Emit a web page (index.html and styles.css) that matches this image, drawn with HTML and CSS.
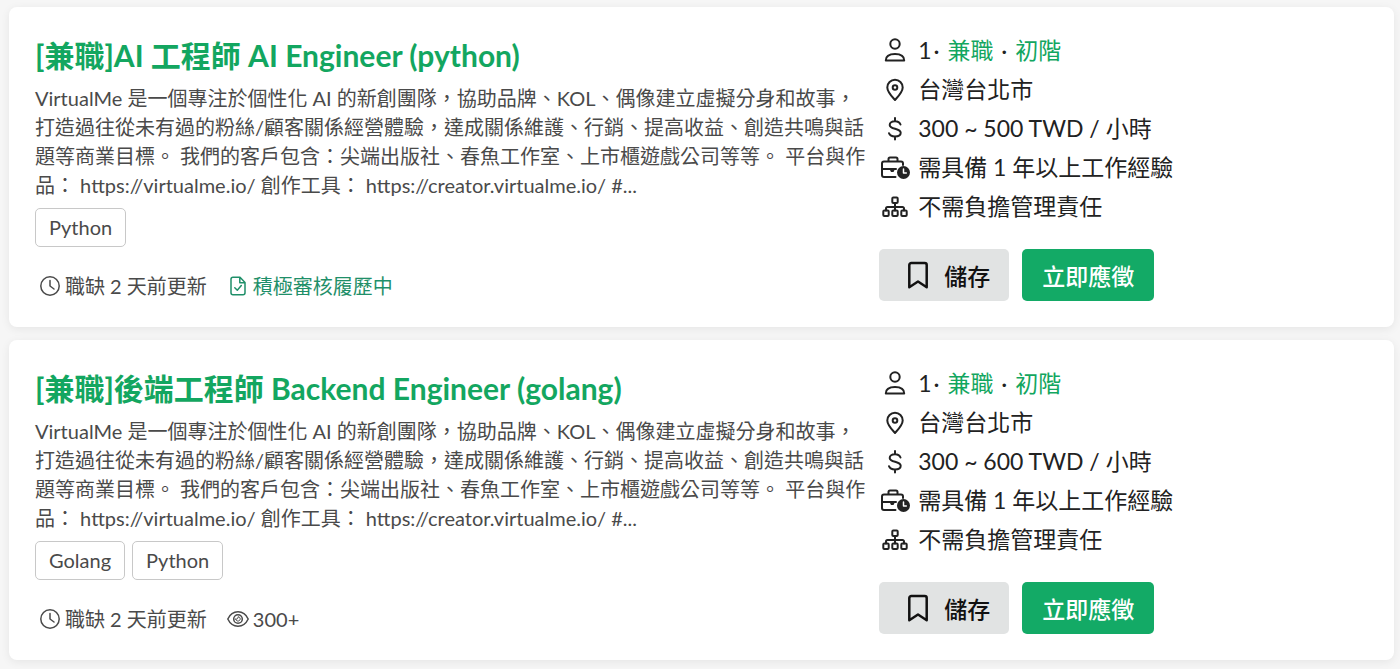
FILE: index.html
```html
<!DOCTYPE html>
<html lang="zh-Hant">
<head>
  <meta charset="UTF-8">
  <meta name="viewport" content="width=device-width, initial-scale=1.0">
  <title>職缺列表</title>
  <link rel="stylesheet" href="styles.css">
</head>
<body>
  <!-- 共用圖示 -->
  <svg class="sprite" aria-hidden="true">
    <symbol id="icon-user" viewBox="0 0 32 32">
      <circle cx="16" cy="9" r="4.700"/>
      <path d="M6.800 25.500c0-4.200 3.200-6.500 9.200-6.500s9.200 2.300 9.200 6.500z"/>
    </symbol>
    <symbol id="icon-pin" viewBox="0 0 32 32">
      <path d="M16 26c-4-4.500-7.700-8.300-7.700-12.600a7.700 7.700 0 0 1 15.400 0c0 4.300-3.700 8.100-7.700 12.600z"/>
      <circle cx="16" cy="13.500" r="2.300"/>
    </symbol>
    <symbol id="icon-dollar" viewBox="0 0 32 32">
      <path d="M16 5v3M16 23.500v3M21.500 11.500c-.8-2.200-2.600-3.200-5.500-3.200-3.300 0-5.300 1.300-5.300 3.600 0 5 11 2.600 11 7.900 0 2.400-2.300 3.700-5.700 3.700-3.100 0-5.200-1.200-6-3.300"/>
    </symbol>
    <symbol id="icon-work" viewBox="0 0 32 32">
      <path d="M9.500 9.500V7A1.500 1.500 0 0 1 11 5.500h6A1.500 1.500 0 0 1 18.500 7v2.500M24 13v-1.500a2 2 0 0 0-2-2H5a2 2 0 0 0-2 2V23a2 2 0 0 0 2 2h11.500M3 17h14"/>
      <path class="solid" d="M10.500 17h5.500l-1.500 3H12z"/>
      <circle class="solid" cx="24.500" cy="20.500" r="6.500"/>
      <path class="hand" d="M24.500 17v4h2.800"/>
    </symbol>
    <symbol id="icon-org" viewBox="0 0 32 32">
      <rect x="13.300" y="6.500" width="5.400" height="5.400" rx="1"/>
      <rect x="4.300" y="19.500" width="5.400" height="5.400" rx="1"/>
      <rect x="13.300" y="19.500" width="5.400" height="5.400" rx="1"/>
      <rect x="22.300" y="19.500" width="5.400" height="5.400" rx="1"/>
      <path d="M16 12v7.500M7 19.500v-2A1.500 1.500 0 0 1 8.500 16h15a1.500 1.500 0 0 1 1.500 1.500v2"/>
    </symbol>
    <symbol id="icon-clock" viewBox="0 0 22 22">
      <circle cx="11" cy="11" r="9.200"/>
      <path d="M11 5.500V11l4 3"/>
    </symbol>
    <symbol id="icon-doc" viewBox="0 0 22 22">
      <path d="M13 2.300H6a2 2 0 0 0-2 2v13.500a2 2 0 0 0 2 2h10a2 2 0 0 0 2-2V7.500zM12.800 2.500v5.200h5M7.800 12.800l2.500 2.400 4-4.600"/>
    </symbol>
    <symbol id="icon-eye" viewBox="0 0 22 22">
      <path d="M.8 11C3 6.300 6.800 3.800 11 3.800s8 2.500 10.200 7.200c-2.200 4.700-6 7.200-10.200 7.200S3 15.700.8 11z"/>
      <circle cx="11" cy="11" r="4.300"/>
      <path class="pupil" d="M8.700 11.200c1.500.2 2.500-.8 2.300-2.400 1.500 0 2.300 1 2.200 2.300-.3 2.600-4.200 2.700-4.500.1z"/>
    </symbol>
    <symbol id="icon-bookmark" viewBox="0 0 20 28">
      <path d="M1.300 26.200V4a2 2 0 0 1 2-2h13.400a2 2 0 0 1 2 2v22.200L10 20.500z"/>
    </symbol>
  </svg>

  <main class="job-list">
    <article class="job-card">
      <div class="job-main">
        <h2 class="job-title"><a href="#">[兼職]AI 工程師 AI Engineer (python)</a></h2>
        <p class="job-desc">VirtualMe 是一個專注於個性化 AI 的新創團隊，協助品牌、KOL、偶像建立虛擬分身和故事，打造過往從未有過的粉絲/顧客關係經營體驗，達成關係維護、行銷、提高收益、創造共鳴與話題等商業目標。 我們的客戶包含：尖端出版社、春魚工作室、上市櫃遊戲公司等等。 平台與作品： https://virtualme.io/ 創作工具： https://creator.virtualme.io/ #...</p>
        <div class="tags">
          <a class="tag" href="#">Python</a>
        </div>
        <div class="meta">
          <span class="meta-item"><svg class="icon-sm"><use href="#icon-clock"/></svg>職缺 2 天前更新</span>
          <span class="meta-item active"><svg class="icon-sm"><use href="#icon-doc"/></svg>積極審核履歷中</span>
        </div>
      </div>
      <div class="job-side">
        <ul class="info">
          <li><svg class="icon"><use href="#icon-user"/></svg><span>1<span class="dot">·</span> <a href="#">兼職</a> <span class="dot">·</span> <a href="#">初階</a></span></li>
          <li><svg class="icon"><use href="#icon-pin"/></svg><span>台灣台北市</span></li>
          <li><svg class="icon"><use href="#icon-dollar"/></svg><span>300 ~ 500 TWD / 小時</span></li>
          <li><svg class="icon"><use href="#icon-work"/></svg><span>需具備 1 年以上工作經驗</span></li>
          <li><svg class="icon"><use href="#icon-org"/></svg><span>不需負擔管理責任</span></li>
        </ul>
        <div class="actions">
          <button class="btn btn-save" type="button"><svg class="icon-bookmark"><use href="#icon-bookmark"/></svg>儲存</button>
          <button class="btn btn-apply" type="button">立即應徵</button>
        </div>
      </div>
    </article>

    <article class="job-card">
      <div class="job-main">
        <h2 class="job-title"><a href="#">[兼職]後端工程師 Backend Engineer (golang)</a></h2>
        <p class="job-desc">VirtualMe 是一個專注於個性化 AI 的新創團隊，協助品牌、KOL、偶像建立虛擬分身和故事，打造過往從未有過的粉絲/顧客關係經營體驗，達成關係維護、行銷、提高收益、創造共鳴與話題等商業目標。 我們的客戶包含：尖端出版社、春魚工作室、上市櫃遊戲公司等等。 平台與作品： https://virtualme.io/ 創作工具： https://creator.virtualme.io/ #...</p>
        <div class="tags">
          <a class="tag" href="#">Golang</a>
          <a class="tag" href="#">Python</a>
        </div>
        <div class="meta">
          <span class="meta-item"><svg class="icon-sm"><use href="#icon-clock"/></svg>職缺 2 天前更新</span>
          <span class="meta-item"><svg class="icon-sm"><use href="#icon-eye"/></svg>300+</span>
        </div>
      </div>
      <div class="job-side">
        <ul class="info">
          <li><svg class="icon"><use href="#icon-user"/></svg><span>1<span class="dot">·</span> <a href="#">兼職</a> <span class="dot">·</span> <a href="#">初階</a></span></li>
          <li><svg class="icon"><use href="#icon-pin"/></svg><span>台灣台北市</span></li>
          <li><svg class="icon"><use href="#icon-dollar"/></svg><span>300 ~ 600 TWD / 小時</span></li>
          <li><svg class="icon"><use href="#icon-work"/></svg><span>需具備 1 年以上工作經驗</span></li>
          <li><svg class="icon"><use href="#icon-org"/></svg><span>不需負擔管理責任</span></li>
        </ul>
        <div class="actions">
          <button class="btn btn-save" type="button"><svg class="icon-bookmark"><use href="#icon-bookmark"/></svg>儲存</button>
          <button class="btn btn-apply" type="button">立即應徵</button>
        </div>
      </div>
    </article>
  </main>
</body>
</html>
```
FILE: styles.css
```css
* {
  box-sizing: border-box;
}

body {
  margin: 0;
  background-color: #f6f6f6;
  color: #222;
  font-family: Lato, "Noto Sans CJK TC", sans-serif;
}

a {
  color: #13a660;
  text-decoration: none;
}

a:hover {
  text-decoration: underline;
}

.sprite {
  display: none;
}

.job-list {
  display: flex;
  flex-direction: column;
  gap: 13px;
  padding: 7px 6px 9px 9px;
}

.job-card {
  display: grid;
  grid-template-columns: 63fr 37fr;
  gap: 12px;
  padding: 24px 26px 26px;
  background-color: #fff;
  border-radius: 8px;
  box-shadow: 0 2px 10px rgba(0, 0, 0, 0.07);
}

/* 左側：職缺內容 */
.job-title {
  margin: 0 0 5px;
  font-size: 30px;
  line-height: 48px;
  font-weight: 700;
}

.job-desc {
  margin: 0 0 8px;
  color: #4a4a4a;
  font-size: 20px;
  line-height: 29px;
}

.tags {
  display: flex;
  gap: 7px;
  margin-bottom: 24px;
}

.tag {
  padding: 0 13px;
  border: 1px solid #c8c8c8;
  border-radius: 5px;
  color: #4a4a4a;
  font-size: 20px;
  line-height: 37px;
}

.meta {
  display: flex;
  gap: 20px;
  padding-left: 4px;
  color: #4a4a4a;
  font-size: 20px;
  line-height: 30px;
}

.meta-item {
  display: flex;
  align-items: center;
  gap: 4px;
}

.meta-item.active {
  color: #1f8f69;
}

/* 右側：條件與按鈕 */
.info {
  margin: 0 0 23px;
  padding: 0;
  list-style: none;
  font-size: 23px;
  line-height: 39px;
}

.info li {
  display: flex;
  align-items: center;
  gap: 7px;
}

.dot {
  margin: 0 2px;
}

.actions {
  display: flex;
  gap: 13px;
}

.btn {
  display: flex;
  align-items: center;
  height: 52px;
  border: none;
  border-radius: 5px;
  font-family: inherit;
  font-size: 23px;
  font-weight: 500;
  cursor: pointer;
}

.btn-save {
  gap: 16px;
  padding: 0 19px 0 29px;
  background-color: #e1e3e3;
  color: #111;
}

.btn-apply {
  padding: 0 20px;
  background-color: #13aa66;
  color: #fff;
}

/* 圖示 */
.icon,
.icon-sm,
.icon-bookmark {
  flex: none;
  fill: none;
  stroke: currentColor;
  stroke-width: 2;
  stroke-linejoin: round;
  stroke-linecap: round;
}

.icon {
  width: 32px;
  height: 32px;
}

.icon-sm {
  width: 22px;
  height: 22px;
  stroke-width: 1.5;
}

.icon-bookmark {
  width: 20px;
  height: 28px;
  stroke-width: 2.5;
}

.solid {
  fill: currentColor;
  stroke: none;
}

.hand {
  stroke: #fff;
  stroke-width: 1.5;
}

.pupil {
  stroke-width: 1;
}
```
